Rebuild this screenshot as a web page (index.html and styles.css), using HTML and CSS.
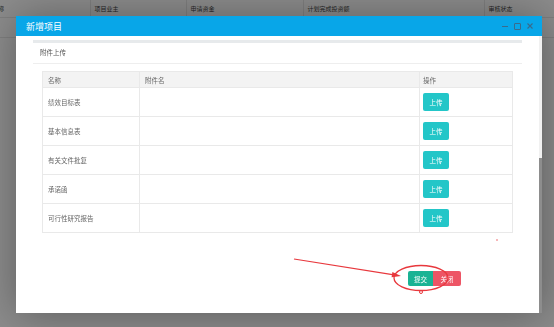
FILE: index.html
```html
<!DOCTYPE html>
<html lang="zh-CN">
<head>
    <meta charset="UTF-8">
    <title>新增项目</title>
    <link rel="stylesheet" href="styles.css">
</head>
<body>
    <!-- page behind the dialog -->
    <table class="list">
        <tr class="list-head">
            <td class="c-name">项目名称</td>
            <td class="c-owner">项目业主</td>
            <td class="c-fund">申请资金</td>
            <td class="c-plan">计划完成投资额</td>
            <td class="c-state">审核状态</td>
        </tr>
        <tr class="list-row">
            <td></td><td></td><td></td><td></td><td></td>
        </tr>
    </table>

    <div class="shade"></div>

    <div class="dialog">
        <div class="dialog-title">
            <span>新增项目</span>
            <div class="dialog-tools">
                <span class="tool-min"></span>
                <span class="tool-max"></span>
                <svg class="tool-close" width="6" height="6" viewBox="0 0 6 6">
                    <path d="M0.5 0.5 L5.5 5.5 M5.5 0.5 L0.5 5.5" stroke="currentColor" stroke-width="1.1"/>
                </svg>
            </div>
        </div>
        <div class="dialog-body">
            <div class="content">
                <div class="top-bar"></div>
                <div class="section-title">附件上传</div>
                <table class="files">
                    <tr>
                        <th class="col-name">名称</th>
                        <th class="col-file">附件名</th>
                        <th class="col-op">操作</th>
                    </tr>
                    <tr>
                        <td>绩效目标表</td><td></td>
                        <td><button class="btn btn-info">上传</button></td>
                    </tr>
                    <tr>
                        <td>基本信息表</td><td></td>
                        <td><button class="btn btn-info">上传</button></td>
                    </tr>
                    <tr>
                        <td>有关文件批复</td><td></td>
                        <td><button class="btn btn-info">上传</button></td>
                    </tr>
                    <tr>
                        <td>承诺函</td><td></td>
                        <td><button class="btn btn-info">上传</button></td>
                    </tr>
                    <tr>
                        <td>可行性研究报告</td><td></td>
                        <td><button class="btn btn-info">上传</button></td>
                    </tr>
                </table>
                <div class="actions">
                    <button class="btn btn-primary">提交</button>
                    <button class="btn btn-danger">关闭</button>
                </div>
            </div>
            <div class="scrollbar">
                <div class="thumb"></div>
            </div>
        </div>
    </div>

    <!-- red marks drawn on the screenshot -->
    <svg class="marks" width="554" height="327" viewBox="0 0 554 327">
        <path d="M294 259 L392.5 274.6" stroke="#e8383d" stroke-width="1.2" fill="none"/>
        <polygon points="401,276 392.4,272 391.6,277.2" fill="#e8383d"/>
        <ellipse cx="421" cy="278" rx="27" ry="12.5" stroke="#e8383d" stroke-width="1.3" fill="none"/>
        <circle cx="421" cy="292" r="1.5" stroke="#e8383d" stroke-width="1" fill="none"/>
        <circle cx="497" cy="240" r="0.7" fill="#e8383d"/>
    </svg>
</body>
</html>
```

FILE: styles.css
```css
/* Page */
body {
    margin: 0;
    background: #fff;
    font-family: "Noto Sans CJK SC", "Noto Sans", sans-serif;
    color: #333;
    width: 554px;
    height: 327px;
    overflow: hidden;
}

/* Background list */
.list {
    border-collapse: collapse;
    table-layout: fixed;
    width: 590px;
    margin-left: -24px;
    font-size: 6px;
    color: #444;
}

.list td {
    box-sizing: border-box;
    border-right: 1px solid #e7e7e7;
    border-bottom: 1px solid #e7e7e7;
    padding: 0 4px;
    white-space: nowrap;
}

.list-head td {
    height: 17px;
}

.list-row td {
    height: 20px;
}

.c-name { width: 114px; }
.c-owner { width: 96px; }
.c-fund { width: 117px; }
.c-plan { width: 181px; }
.c-state { width: 82px; }

.shade {
    position: fixed;
    inset: 0;
    background: rgba(0, 0, 0, 0.45);
}

/* Dialog */
.dialog {
    position: absolute;
    left: 16px;
    top: 16px;
    width: 526px;
    height: 297px;
    background: #fff;
    display: flex;
    flex-direction: column;
    box-shadow: 1px 1px 40px rgba(0, 0, 0, 0.35);
}

.dialog-title {
    height: 20px;
    flex: none;
    background: #08a6e8;
    color: #fff;
    font-size: 9px;
    display: flex;
    align-items: center;
    justify-content: space-between;
    padding: 0 9px 0 10px;
}

.dialog-tools {
    display: flex;
    align-items: center;
    gap: 6px;
    color: #3a6b8c;
}

.tool-min {
    width: 6px;
    height: 1px;
    background: #3a6b8c;
}

.tool-max {
    width: 5px;
    height: 5px;
    border: 1px solid #3a6b8c;
    border-radius: 1px;
}

.dialog-body {
    flex: 1;
    display: flex;
    overflow: hidden;
}

.content {
    flex: 1;
    padding: 4px 17px 0;
}

.scrollbar {
    width: 3px;
    background: #f1f1f1;
    display: flex;
    flex-direction: column;
}

.thumb {
    margin-top: 122px;
    flex: 1;
    background: #8d8d8d;
}

/* Content */
.top-bar {
    height: 3px;
    background: #e7eaec;
}

.section-title {
    height: 20px;
    line-height: 19px;
    padding-left: 7px;
    font-size: 6.5px;
    color: #555;
    border-bottom: 1px solid #eeeeee;
}

.files {
    border-collapse: collapse;
    margin: 7px 0 0 9px;
    width: 471px;
    font-size: 6.5px;
    color: #666;
}

.files th,
.files td {
    border: 1px solid #e9e9e9;
    text-align: left;
    padding: 0 5px;
    font-weight: normal;
}

.files th {
    height: 15px;
    background: #f3f3f3;
}

.files td {
    height: 28px;
}

.files .col-name { width: 86px; }
.files .col-file { width: 269px; }

.files .col-op,
.files td:last-child {
    padding-left: 3px;
}

/* Buttons */
.btn {
    border: none;
    color: #fff;
    font-family: inherit;
    font-size: 6.5px;
    padding: 0;
    border-radius: 2px;
}

.btn-info {
    background: #23c6c8;
    width: 26px;
    height: 18px;
    display: block;
}

.actions {
    display: flex;
    justify-content: flex-end;
    margin: 38px 61px 0 0;
}

.btn-primary {
    background: #1ab394;
    width: 25px;
    height: 15px;
    border-radius: 2px 0 0 2px;
}

.btn-danger {
    background: #ed5565;
    width: 28px;
    height: 15px;
    border-radius: 0 2px 2px 0;
}

/* Annotation */
.marks {
    position: absolute;
    left: 0;
    top: 0;
}
```
